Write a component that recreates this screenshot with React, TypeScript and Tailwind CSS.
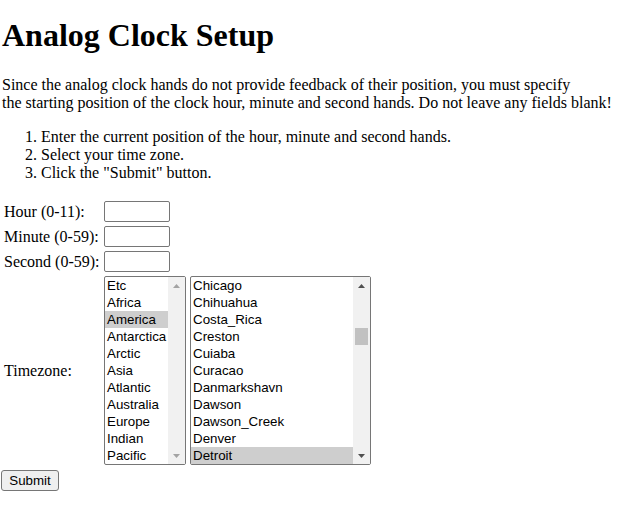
import React from 'react'

const regions = ['Etc', 'Africa', 'America', 'Antarctica', 'Arctic', 'Asia', 'Atlantic', 'Australia', 'Europe', 'Indian', 'Pacific']
const cities = ['Chicago', 'Chihuahua', 'Costa_Rica', 'Creston', 'Cuiaba', 'Curacao', 'Danmarkshavn', 'Dawson', 'Dawson_Creek', 'Denver', 'Detroit']

function Arrow({ up, color }: { up?: boolean; color: string }) {
  return (
    <div className="h-[17px] flex items-center justify-center">
      <svg width="7" height="4" viewBox="0 0 7 4">
        <polygon points={up ? '0,4 7,4 3.5,0' : '0,0 7,0 3.5,4'} fill={color} />
      </svg>
    </div>
  )
}

function Scrollbar({ active }: { active?: boolean }) {
  const color = active ? '#505050' : '#a3a3a3'
  return (
    <div className="w-[17px] shrink-0 bg-[#f1f1f1] flex flex-col">
      <Arrow up color={color} />
      {active && <div className="mt-[34px] mx-[2px] h-[17px] bg-[#c1c1c1]" />}
      <div className="flex-1" />
      <Arrow color={color} />
    </div>
  )
}

function ListBox({ items, selected, width, active }: { items: string[]; selected: string; width: string; active?: boolean }) {
  return (
    <div className={`${width} h-[189px] border border-[#767676] rounded-[2px] flex bg-white font-['Liberation_Sans',Arial,sans-serif] text-[13.33px]`}>
      <div className="flex-1 flex flex-col min-w-0">
        {items.map((it) => (
          <div
            key={it}
            className={`h-[17px] leading-[17px] pl-[2px] whitespace-nowrap overflow-hidden ${it === selected ? 'bg-[#cecece]' : ''}`}
          >
            {it}
          </div>
        ))}
      </div>
      <Scrollbar active={active} />
    </div>
  )
}

function TextInput() {
  return <div className="w-[66px] h-[21px] border border-[#767676] rounded-[2px] bg-white" />
}

export default function App() {
  const fields = ['Hour (0-11):', 'Minute (0-59):', 'Second (0-59):']
  return (
    <div className="w-[643px] h-[520px] bg-white text-black pl-[1px] font-['Liberation_Serif','Times_New_Roman',serif] flex flex-col">
      <h1 className="mt-[17px] text-[32px] leading-[37px] font-bold pl-[1px]">Analog Clock Setup</h1>
      <p className="mt-[22px] text-[16px] leading-[18px] pl-[1px]">
        Since the analog clock hands do not provide feedback of their position, you must specify
        <br />
        the starting position of the clock hour, minute and second hands. Do not leave any fields blank!
      </p>
      <ol className="mt-[16px] pl-[40px] list-decimal text-[16px] leading-[18px]">
        <li>Enter the current position of the hour, minute and second hands.</li>
        <li>Select your time zone.</li>
        <li>Click the "Submit" button.</li>
      </ol>
      <div className="mt-[19px] grid grid-cols-[103px_auto] gap-y-[4px] text-[16px] leading-[18px] justify-start">
        {fields.map((f) => (
          <React.Fragment key={f}>
            <div className="pl-[3px] self-center whitespace-nowrap">{f}</div>
            <TextInput />
          </React.Fragment>
        ))}
        <div className="pl-[3px] self-center">Timezone:</div>
        <div className="flex gap-[4px]">
          <ListBox items={regions} selected="America" width="w-[82px]" />
          <ListBox items={cities} selected="Detroit" width="w-[181px]" active />
        </div>
      </div>
      <div className="mt-[3px]">
        <button className="w-[58px] h-[21px] border border-[#767676] rounded-[3px] bg-[#efefef] font-['Liberation_Sans',Arial,sans-serif] text-[13.33px] leading-[19px] text-black">
          Submit
        </button>
      </div>
    </div>
  )
}
